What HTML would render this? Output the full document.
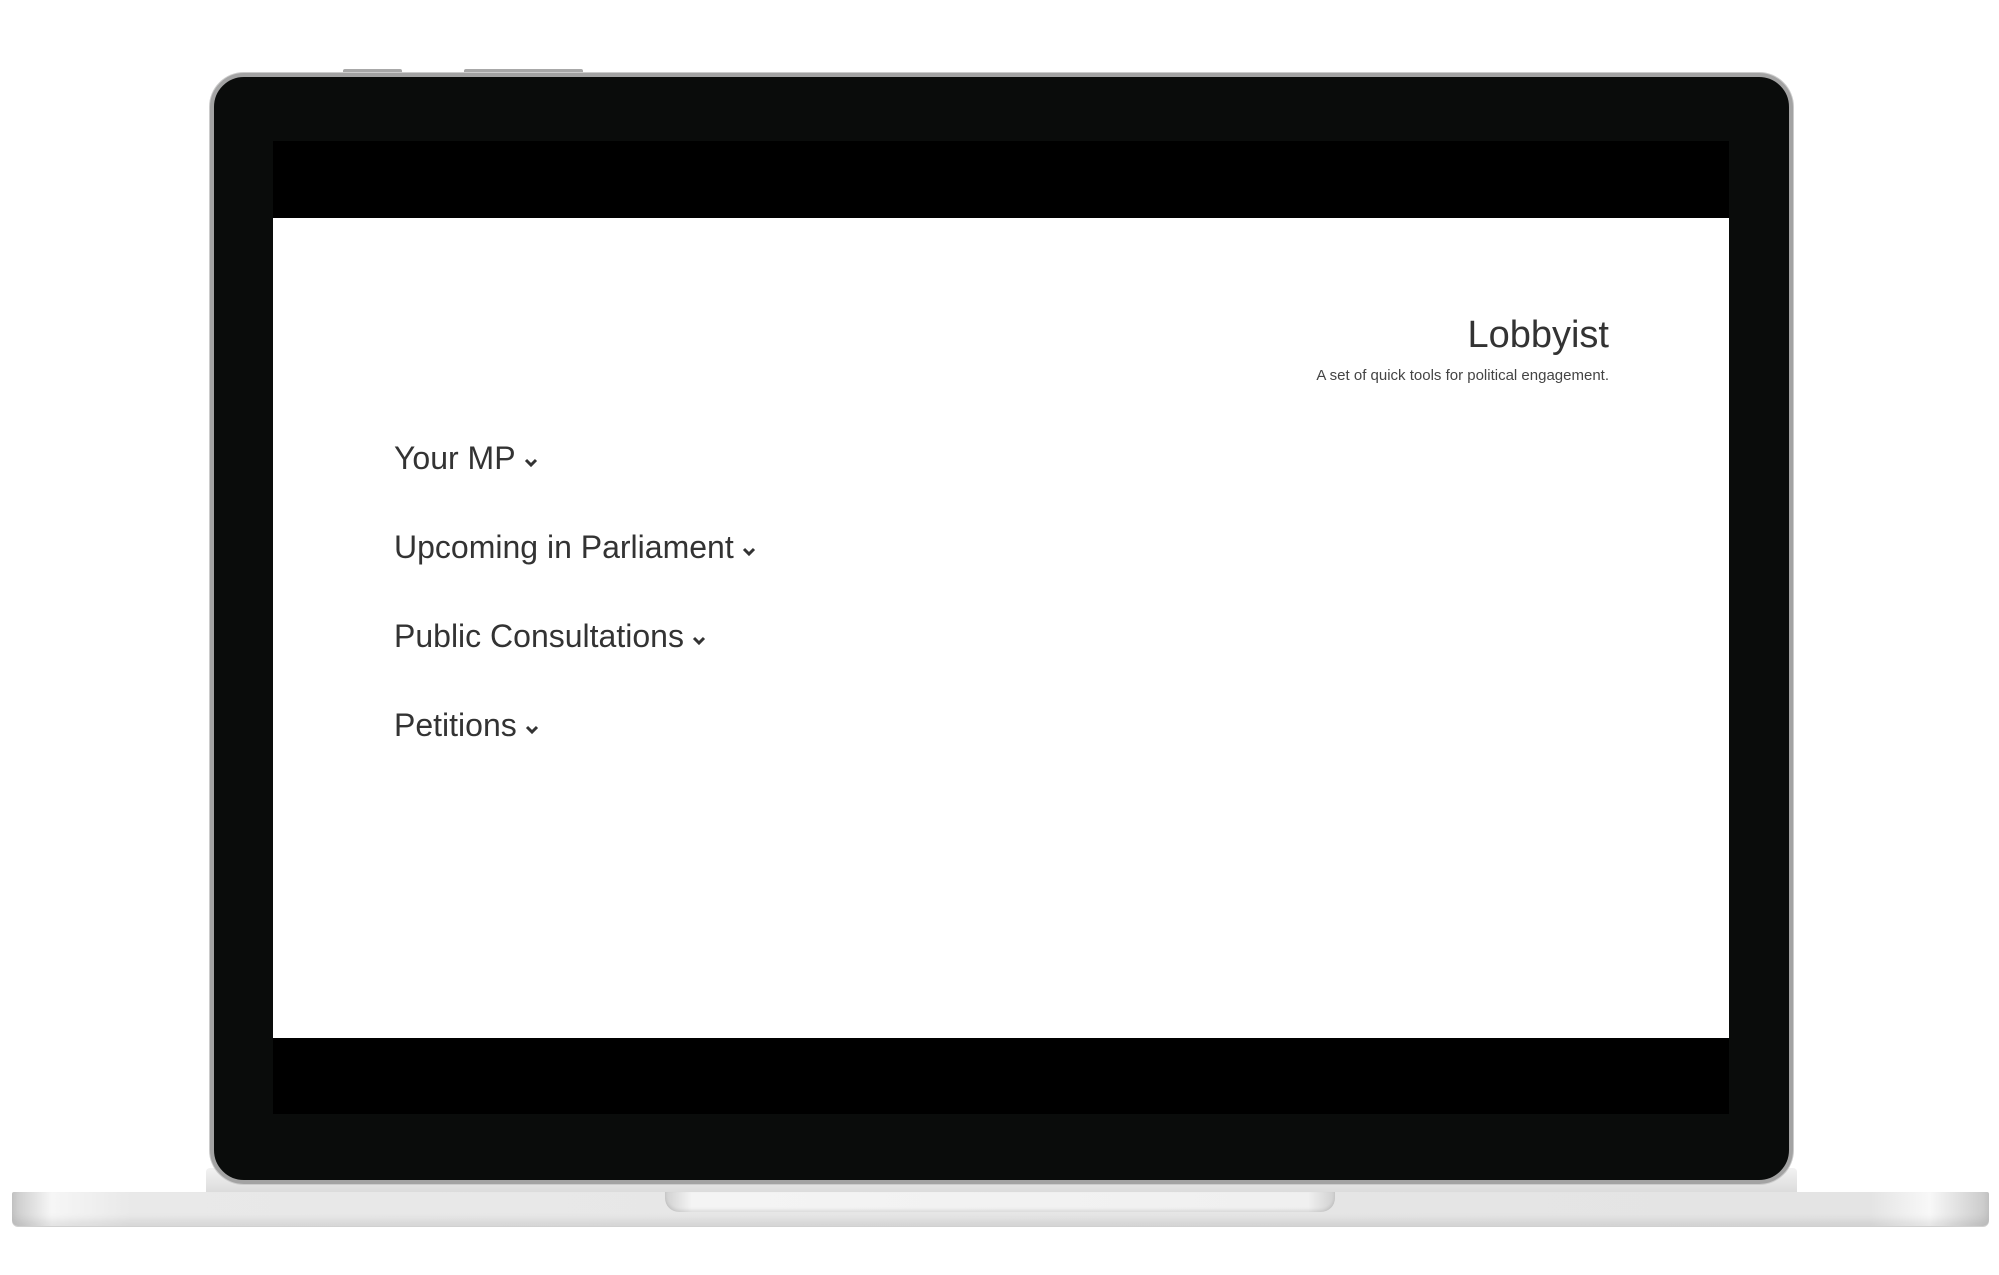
<!DOCTYPE html>
<html><head><meta charset="utf-8"><style>
*{margin:0;padding:0;box-sizing:border-box}
body{width:1999px;height:1275px;background:#fff;position:relative;overflow:hidden;font-family:"Liberation Sans",sans-serif;color:#333}
.abs{position:absolute}
.btn{top:69px;height:5px;background:#a8a8a8;border-radius:2px 2px 0 0}
.lid{left:210px;top:73px;width:1583px;height:1111px;background:#0a0c0b;border:4px solid #a3a3a3;border-radius:34px;box-shadow:0 0 0 1px #ccc}
.hinge{left:206px;top:1168px;width:1591px;height:24px;background:linear-gradient(#f2f2f2,#dcdcdc);border-radius:4px 4px 0 0;z-index:0}
.base{left:12px;top:1192px;width:1977px;height:34px;border-radius:2px 2px 6px 6px;background:linear-gradient(90deg,#c8c8c8 0%,#f6f6f6 2%,#e9e9e9 6%,#e6e6e6 50%,#e4e4e4 94%,#f8f8f8 97%,#c8c8c8 100%);box-shadow:inset 0 -6px 8px rgba(0,0,0,.08),0 1px 0 #d0d0d0}
.notch{left:665px;top:1192px;width:670px;height:20px;background:linear-gradient(90deg,#d0d0d0,#f4f4f4 4%,#f0f0f0 96%,#d0d0d0);border-radius:0 0 14px 14px;box-shadow:inset 0 -2px 3px rgba(0,0,0,.1)}
.scr{left:273px;top:141px;width:1456px;height:973px;background:#000}
.white{left:273px;top:218px;width:1456px;height:820px;background:#fff}
h1{position:absolute;right:390px;top:310px;font-size:38px;font-weight:normal;color:#333;line-height:50px}
.sub{position:absolute;right:390px;top:367px;font-size:15px;color:#444}
.item{position:absolute;left:394px;font-size:32px;line-height:40px;color:#333}
.item svg{display:inline-block;margin-left:8px;vertical-align:middle;position:relative;top:2px}
</style></head><body>
<div class="abs btn" style="left:343px;width:59px"></div>
<div class="abs btn" style="left:464px;width:119px"></div>
<div class="abs hinge"></div>
<div class="abs lid"></div>
<div class="abs base"></div>
<div class="abs notch"></div>
<div class="abs scr"></div>
<div class="abs white"></div>
<h1>Lobbyist</h1>
<div class="sub">A set of quick tools for political engagement.</div>
<div class="item" style="top:438px">Your MP<svg width="14" height="10" viewBox="0 0 14 10"><path d="M2 2l5 5 5-5" fill="none" stroke="#333" stroke-width="3"/></svg></div>
<div class="item" style="top:527px">Upcoming in Parliament<svg width="14" height="10" viewBox="0 0 14 10"><path d="M2 2l5 5 5-5" fill="none" stroke="#333" stroke-width="3"/></svg></div>
<div class="item" style="top:616px">Public Consultations<svg width="14" height="10" viewBox="0 0 14 10"><path d="M2 2l5 5 5-5" fill="none" stroke="#333" stroke-width="3"/></svg></div>
<div class="item" style="top:705px">Petitions<svg width="14" height="10" viewBox="0 0 14 10"><path d="M2 2l5 5 5-5" fill="none" stroke="#333" stroke-width="3"/></svg></div>
</body></html>
